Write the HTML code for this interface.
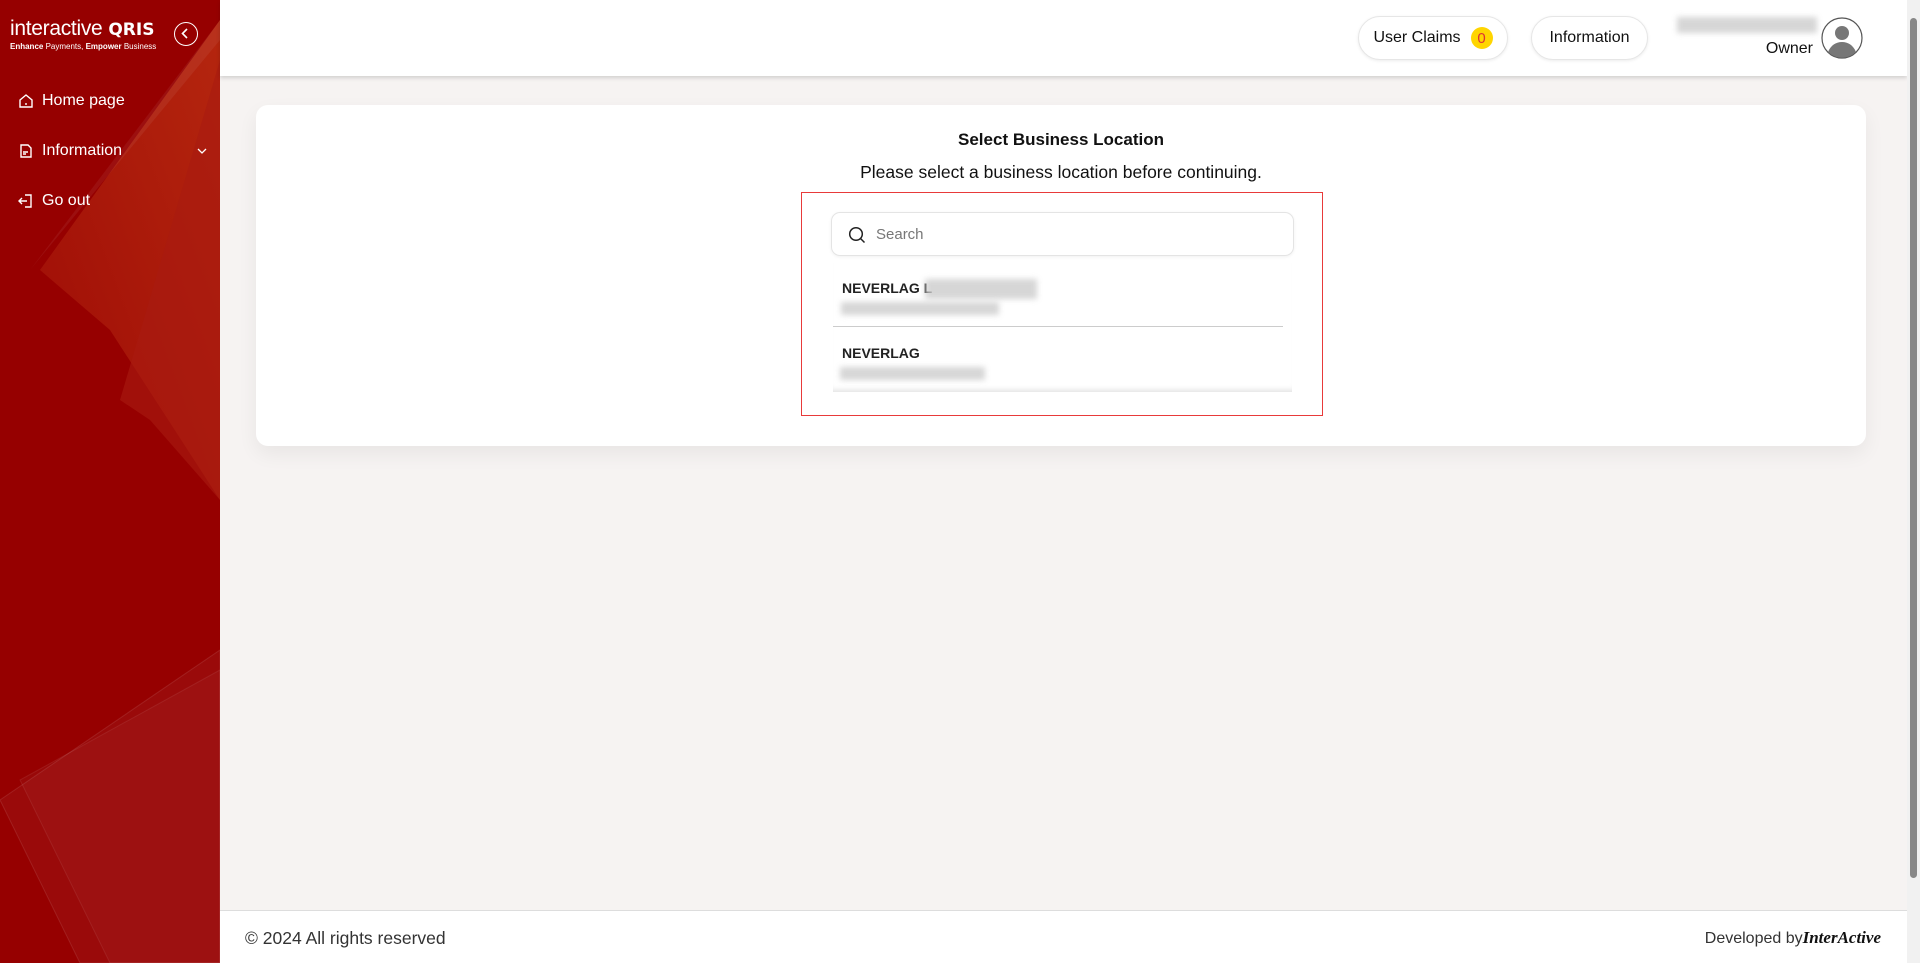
<!DOCTYPE html>
<html><head><meta charset="utf-8"><style>
*{box-sizing:border-box;margin:0;padding:0}
html,body{overflow:hidden}
body{width:1920px;height:963px;font-family:"Liberation Sans",sans-serif;background:#f6f3f2;position:relative;color:#111}
.sb{position:absolute;left:0;top:0;width:220px;height:963px;background:#960000;overflow:hidden}
.logo{position:absolute;left:10px;top:17px;color:#fff}
.logo .a{font-size:21px;letter-spacing:-.3px}
.logo .b{font-size:8px;margin-top:1px}
.col{position:absolute;left:174px;top:22px;width:24px;height:24px;border:1.5px solid #fff;border-radius:50%}
.mi{position:absolute;left:18px;color:#fff;font-size:16px;display:flex;align-items:center;gap:8px}
.hd{position:absolute;left:220px;top:0;width:1687px;height:76px;background:#fff;box-shadow:0 2px 4px rgba(0,0,0,.15)}
.pill{position:absolute;top:16px;height:44px;border:1px solid #e6e6e6;border-radius:22px;background:#fff;font-size:16px;display:flex;align-items:center;justify-content:center;box-shadow:0 1px 3px rgba(0,0,0,.08)}
.card{position:absolute;left:256px;top:105px;width:1610px;height:341px;background:#fff;border-radius:12px;box-shadow:0 8px 20px rgba(0,0,0,.06)}
.red{position:absolute;left:801px;top:192px;width:522px;height:224px;border:1.5px solid #e83a3a}
.search{position:absolute;left:831px;top:212px;width:463px;height:44px;border:1px solid #e4e4e4;border-radius:9px;box-shadow:0 1px 3px rgba(0,0,0,.06)}
.list{position:absolute;left:833px;top:263px;width:459px;height:129px;background:#fff;box-shadow:inset 0 -6px 6px -4px rgba(0,0,0,.12)}
.blur{position:absolute;background:#ccc;filter:blur(3px);opacity:.8}
.ft{position:absolute;left:220px;top:910px;width:1687px;height:53px;background:#fff;border-top:1px solid #ddd}
.scroll{position:absolute;right:0;top:0;width:13px;height:963px;background:#f1f1f1}
</style></head><body>
<div class="sb">
<svg width="220" height="963" style="position:absolute;left:0;top:0">
<defs><linearGradient id="g1" x1="1" y1="0" x2="0" y2="1"><stop offset="0" stop-color="#b82a10"/><stop offset="1" stop-color="#9e0c06"/></linearGradient></defs>
<polygon points="220,20 220,500 110,330 40,270" fill="url(#g1)" opacity=".9"/>
<polygon points="220,60 220,500 150,420 120,400" fill="#a81a10" opacity=".6"/>
<polygon points="30,270 220,20 220,40" fill="rgba(255,255,255,.06)"/>
<polygon points="0,800 220,650 220,963 80,963" fill="rgba(255,255,255,.04)" stroke="rgba(255,255,255,.1)"/>
<polygon points="20,780 220,670 220,963 110,963" fill="rgba(255,255,255,.03)" stroke="rgba(255,255,255,.08)"/>
</svg>
<div class="logo"><div class="a">interactive<b style="font-family:'DejaVu Sans';font-size:17px;letter-spacing:0"> QRIS</b></div><div class="b"><b>Enhance</b> Payments, <b>Empower</b> Business</div></div>
<div class="col"><svg width="21" height="21" viewBox="0 0 21 21" style="position:absolute;left:0;top:0"><path d="M12 6l-4.5 4.5L12 15" stroke="#fff" stroke-width="1.6" fill="none"/></svg></div>
<div class="mi" style="top:92px"><svg width="16" height="16" viewBox="0 0 16 16"><path d="M2 7L8 2l6 5v7H2z M8 10v2" stroke="#fff" stroke-width="1.4" fill="none"/></svg>Home page</div>
<div class="mi" style="top:142px"><svg width="16" height="16" viewBox="0 0 16 16"><path d="M3 2h7l3 3v9H3z M5 9h5M5 11h3" stroke="#fff" stroke-width="1.4" fill="none"/></svg>Information</div>
<svg style="position:absolute;left:197px;top:147px" width="10" height="8" viewBox="0 0 10 8"><path d="M1 2l4 4 4-4" stroke="#fff" stroke-width="1.3" fill="none"/></svg>
<div class="mi" style="top:192px"><svg width="16" height="16" viewBox="0 0 16 16"><path d="M7 2h6v12H7 M1 8h8 M4 5L1 8l3 3" stroke="#fff" stroke-width="1.4" fill="none"/></svg>Go out</div>
</div>
<div class="hd">
<div class="pill" style="left:1138px;width:150px;gap:10px">User Claims <span style="width:22px;height:22px;border-radius:50%;background:#ffd500;color:#d33;font-size:15px;display:inline-flex;align-items:center;justify-content:center">0</span></div>
<div class="pill" style="left:1311px;width:117px">Information</div>
<div class="blur" style="left:1457px;top:17px;width:140px;height:16px"></div>
<div style="position:absolute;right:94px;top:40px;font-size:16px">Owner</div>
<svg style="position:absolute;left:1601px;top:17px" width="42" height="42" viewBox="0 0 42 42"><circle cx="21" cy="21" r="20" fill="#fff" stroke="#555" stroke-width="1.2"/><circle cx="21" cy="16" r="7" fill="#777"/><path d="M7 35c3-7 8-10 14-10s11 3 14 10a20 20 0 0 1-28 0z" fill="#777"/></svg>
</div>
<div class="card">
<div style="position:absolute;top:25px;width:100%;text-align:center;font-weight:bold;font-size:17px">Select Business Location</div>
<div style="position:absolute;top:57px;width:100%;text-align:center;font-size:17.5px">Please select a business location before continuing.</div>
</div>
<div class="red"></div>
<div class="search"><svg style="position:absolute;left:16px;top:13px" width="18" height="18" viewBox="0 0 18 18"><circle cx="8" cy="8" r="6.3" stroke="#222" stroke-width="1.5" fill="none"/><path d="M12.5 12.5l4 4" stroke="#222" stroke-width="1.5"/></svg><span style="position:absolute;left:44px;top:13px;font-size:15px;color:#777">Search</span></div>
<div class="list">
<div style="position:absolute;left:9px;top:17px;font-weight:bold;font-size:14px;color:#222">NEVERLAG L</div>
<div class="blur" style="left:92px;top:16px;width:112px;height:20px"></div>
<div class="blur" style="left:8px;top:39px;width:158px;height:13px"></div>
<div style="position:absolute;left:0;top:63px;width:450px;height:1px;background:#ccc"></div>
<div style="position:absolute;left:9px;top:82px;font-weight:bold;font-size:14px;color:#222">NEVERLAG</div>
<div class="blur" style="left:7px;top:104px;width:145px;height:13px"></div>
</div>
<div class="ft">
<div style="position:absolute;left:25px;top:17px;font-size:17.5px;color:#333">© 2024 All rights reserved</div>
<div style="position:absolute;right:26px;top:17px;font-size:16px;color:#333">Developed by<b style="font-style:italic;font-family:'Liberation Serif';font-size:17px;color:#111">InterActive</b></div>
</div>
<div class="scroll"><div style="position:absolute;left:3px;top:18px;width:7px;height:860px;background:#888;border-radius:4px"></div></div>
</body></html>
